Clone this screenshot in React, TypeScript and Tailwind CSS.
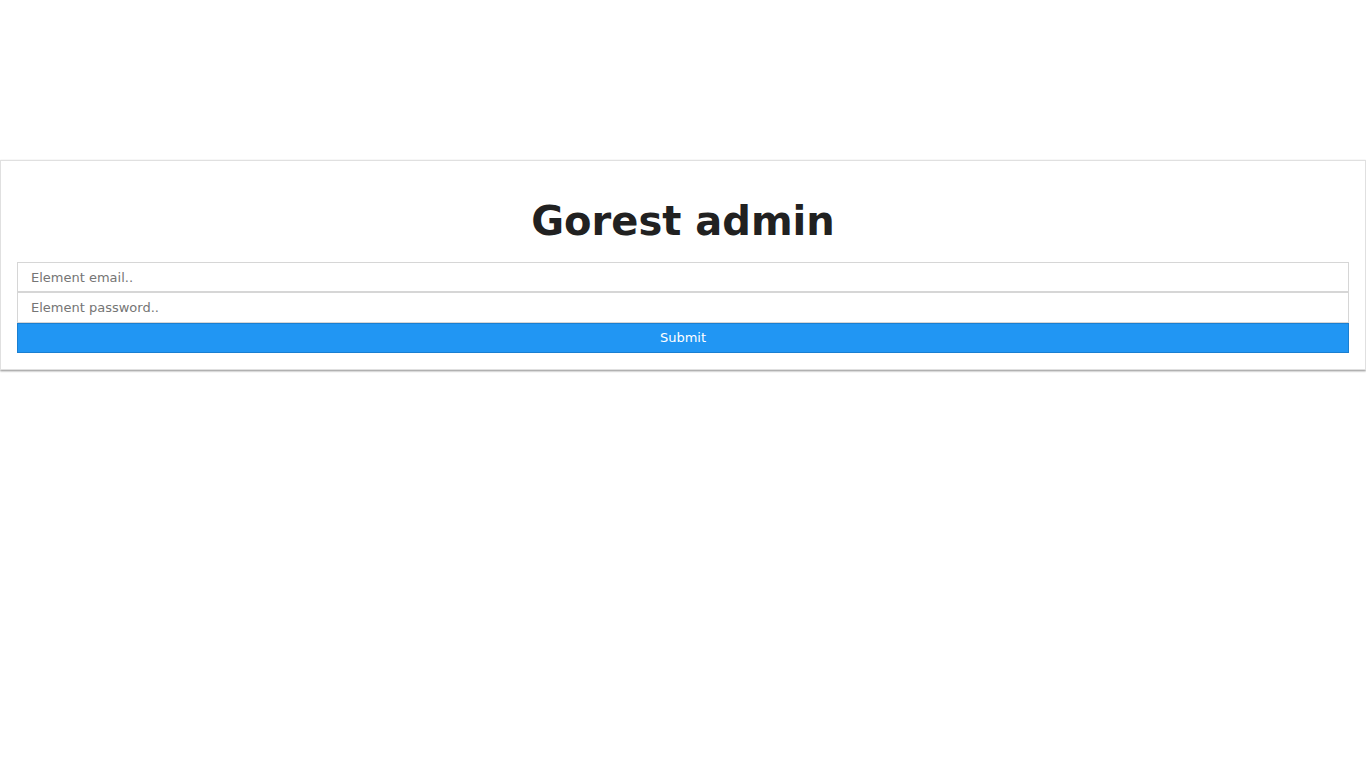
const App = () => {
  return (
    <div className="min-h-screen bg-white pt-[160px] font-['DejaVu_Sans',sans-serif]">
      <div className="border border-[#e0e0e0] bg-white px-4 pt-[20px] pb-4 shadow-[0_1px_2px_rgba(0,0,0,0.45)]">
        <h1 className="text-center text-[40px] font-bold leading-[81px] text-[#212121]">
          Gorest admin
        </h1>
        <form className="flex flex-col" onSubmit={(e) => e.preventDefault()}>
          <input
            type="email"
            placeholder="Element email.."
            className="h-[30px] w-full border border-[#d6d6d6] bg-white px-[13px] text-[13px] text-[#212121] outline-none placeholder:text-[#757575]"
          />
          <input
            type="password"
            placeholder="Element password.."
            className="h-[31px] w-full border border-[#d6d6d6] bg-white px-[13px] text-[13px] text-[#212121] outline-none placeholder:text-[#757575]"
          />
          <button
            type="submit"
            className="h-[30px] w-full border border-[#1a7fd1] bg-[#2196f3] text-[13px] text-white"
          >
            Submit
          </button>
        </form>
      </div>
    </div>
  );
};

export default App;
